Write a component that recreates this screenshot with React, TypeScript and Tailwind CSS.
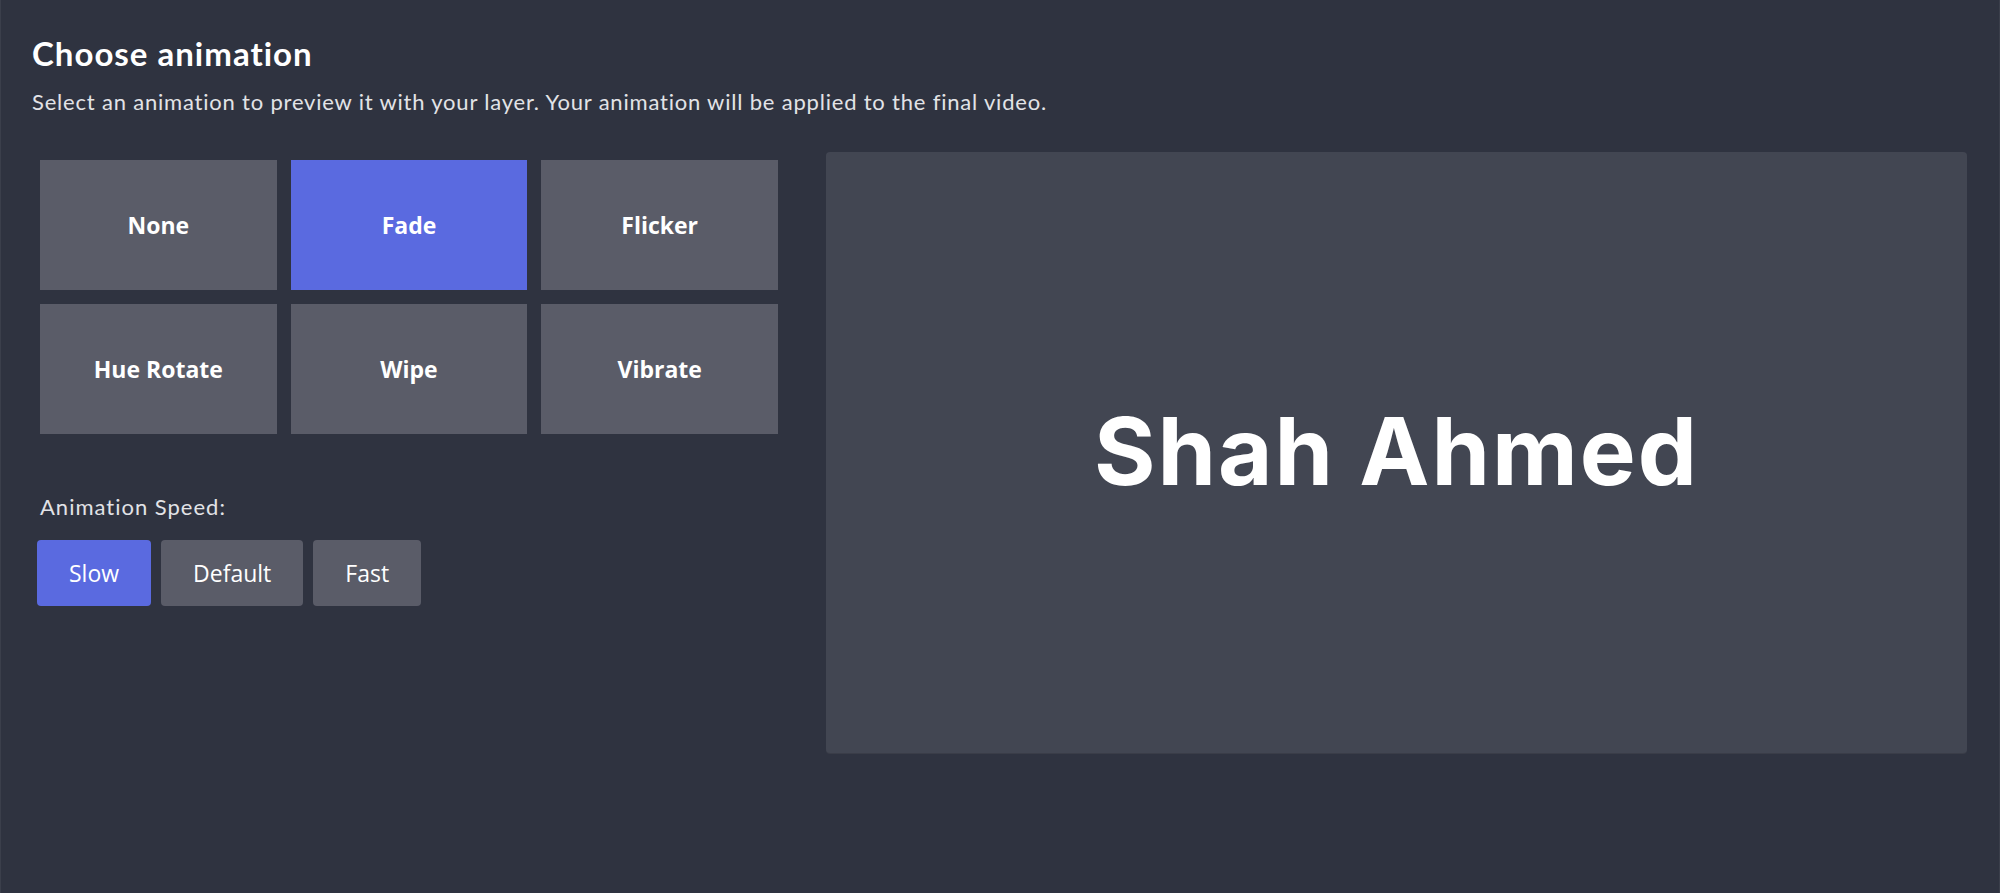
import { useState } from 'react'

const animations = ['None', 'Fade', 'Flicker', 'Hue Rotate', 'Wipe', 'Vibrate']
const speeds = ['Slow', 'Default', 'Fast']

export default function App() {
  const [animation, setAnimation] = useState('Fade')
  const [speed, setSpeed] = useState('Slow')

  return (
    <div className="min-h-screen bg-[#2f3340] border-x border-[#3b3f4b] px-[31px] pt-[33px] font-['Lato',sans-serif]">
      {/* Header */}
      <h1 className="text-[33px] leading-[40px] font-bold text-white tracking-[1px]">Choose animation</h1>
      <p className="mt-[15px] text-[22px] leading-[28px] text-[#e2e3e7] tracking-[0.8px]">
        Select an animation to preview it with your layer. Your animation will be applied to the final video.
      </p>

      <div className="mt-[36px] flex gap-[40px]">
        {/* Left column - options */}
        <div className="w-[754px] shrink-0">
          <div className="m-[8px] grid grid-cols-3 gap-[14px] w-[738px]">
            {animations.map((name) => (
              <button
                key={name}
                onClick={() => setAnimation(name)}
                className={
                  'h-[130px] flex items-center justify-center text-white text-[23px] font-bold font-["Open_Sans",sans-serif] ' +
                  (animation === name ? 'bg-[#5a6ae0]' : 'bg-[#5a5c68]')
                }
              >
                {name}
              </button>
            ))}
          </div>

          <div className="mt-[59px] pl-[8px] text-[22px] leading-[28px] text-[#e2e3e7] tracking-[1px]">Animation Speed:</div>
          <div className="mt-[19px] ml-[5px] flex gap-[10px]">
            {speeds.map((s) => (
              <button
                key={s}
                onClick={() => setSpeed(s)}
                className={
                  'h-[66px] px-[32px] rounded-[4px] text-white text-[23px] font-["Open_Sans",sans-serif] ' +
                  (speed === s ? 'bg-[#5a6ae0]' : 'bg-[#5a5c68]')
                }
              >
                {s}
              </button>
            ))}
          </div>
        </div>

        {/* Right column - preview */}
        <div className="w-[1141px] h-[601px] rounded-[4px] bg-[#424652] shadow-[0_1px_0_#3a3d48] flex items-center justify-center">
          <span className="text-white text-[94px] font-bold font-['Inter',sans-serif] tracking-[2px] leading-none pb-[4px]">Shah Ahmed</span>
        </div>
      </div>
    </div>
  )
}
